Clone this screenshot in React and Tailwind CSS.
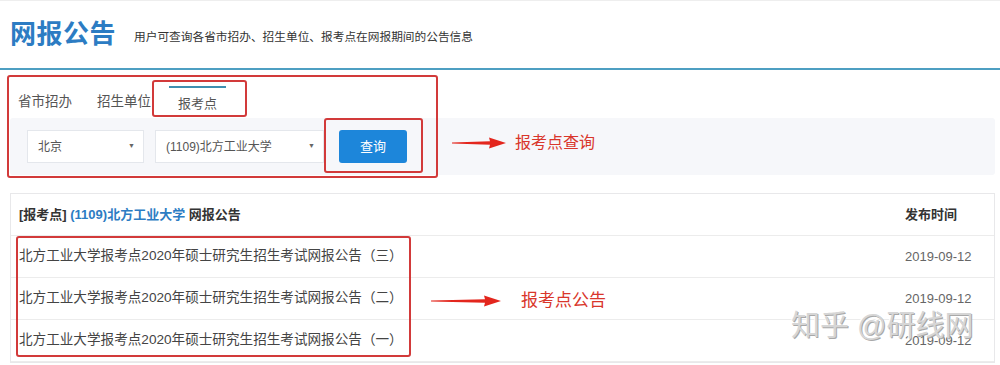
import React from 'react';

const font = '[font-family:"Liberation_Sans","Noto_Sans_CJK_SC",sans-serif]';

const Arrow = ({ w = 55 }) => (
  <svg width={w} height="12" viewBox={`0 0 ${w} 12`}>
    <polygon
      points={`0,5.6 ${w - 16},4.2 ${w - 17},0.5 ${w},6 ${w - 17},11.5 ${w - 16},7.8 0,6.4`}
      fill="#e3261d"
    />
  </svg>
);

const Select = ({ label, width }) => (
  <div
    className={`h-[33px] bg-white border border-[#e4e7ec] flex items-center justify-between pl-[10px] pr-[8px] text-[12px] text-[#555] ${width}`}
  >
    <span>{label}</span>
    <span className="text-[7px] text-[#666]">▼</span>
  </div>
);

const rows = [
  '北方工业大学报考点2020年硕士研究生招生考试网报公告（三）',
  '北方工业大学报考点2020年硕士研究生招生考试网报公告（二）',
  '北方工业大学报考点2020年硕士研究生招生考试网报公告（一）',
];

export default function App() {
  return (
    <div className={`w-[1000px] h-[365px] bg-white overflow-hidden relative ${font}`}>
      {/* HEADER */}
      <header className="h-[70px] border-t border-[#eeeeee] border-b-2 border-b-[#4d9fc2] flex items-center pl-[10px] pb-[2px]">
        <h1 className="text-[26px] font-bold text-[#2c7cc3] tracking-[0.5px] leading-none">网报公告</h1>
        <p className="ml-[18px] mt-[6px] text-[11.7px] text-[#333]">用户可查询各省市招办、招生单位、报考点在网报期间的公告信息</p>
      </header>

      {/* TABS */}
      <div className="relative">
        <div className="flex items-end h-[48px] pl-[10px] text-[13.5px] text-[#555]">
          <div className="h-[32px] px-[8px] flex items-center">省市招办</div>
          <div className="h-[32px] px-[8px] ml-[9px] flex items-center">招生单位</div>
          <div className="h-[32px] w-[57px] ml-[10px] pt-[2px] flex items-center justify-center border-t-2 border-[#3e8fb0] bg-white text-[13px]">报考点</div>
        </div>

        {/* SEARCH BAR */}
        <div className="ml-[10px] mr-[5px] h-[57px] bg-[#f6f7fa] rounded-[3px] flex items-start pt-[12px] pl-[17px]">
          <Select label="北京" width="w-[117px]" />
          <div className="ml-[11px]">
            <Select label="(1109)北方工业大学" width="w-[169px]" />
          </div>
          <button className="ml-[15px] w-[68px] h-[33px] rounded-[3px] bg-[#1d86da] text-white text-[13px]">查询</button>
          <div className="ml-[45px] mt-[1px] flex items-center">
            <Arrow w={54} />
            <span className="ml-[9px] text-[16px] text-[#d9362b]">报考点查询</span>
          </div>
        </div>

        {/* annotations */}
        <div className="absolute left-[7px] top-[5px] w-[431px] h-[103px] border-2 border-[#d23a3a] rounded-[3px] pointer-events-none" />
        <div className="absolute left-[152px] top-[10px] w-[95px] h-[37px] border-2 border-[#d23a3a] rounded-[3px] pointer-events-none" />
        <div className="absolute left-[324px] top-[48px] w-[99px] h-[55px] border-2 border-[#d23a3a] rounded-[3px] pointer-events-none" />
      </div>

      {/* TABLE */}
      <div className="relative mt-[18px] ml-[10px] mr-[5px] border border-[#e8e8ea]">
        <div className="h-[42px] flex items-center justify-between pl-[8px] pr-[21px] border-b border-[#ececec] text-[13px] font-bold text-[#333]">
          <div>
            [报考点] <span className="text-[#2c7cc3]">(1109)北方工业大学</span> 网报公告
          </div>
          <div className="w-[68px]">发布时间</div>
        </div>
        {rows.map((r, i) => (
          <div key={i} className="h-[42px] flex items-center justify-between pl-[8px] pr-[21px] border-b border-[#ececec] text-[13.6px] text-[#444]">
            <div>{r}</div>
            <div className="w-[68px] text-[13px] text-[#666]">2019-09-12</div>
          </div>
        ))}

        {/* annotations */}
        <div className="absolute left-[5px] top-[42px] w-[395px] h-[121px] border-2 border-[#d23a3a] rounded-[3px] pointer-events-none" />
        <div className="absolute left-[420px] top-[94px] flex items-center">
          <Arrow w={70} />
          <span className="ml-[20px] text-[17px] text-[#d9362b]">报考点公告</span>
        </div>
        <div className="absolute left-[780px] top-[118px] text-[29px] text-[#d6d6d6] leading-none whitespace-nowrap [text-shadow:1px_1px_0_#a8a8a8,-1px_-1px_0_#ffffff] pointer-events-none">
          知乎 @研线网
        </div>
      </div>
    </div>
  );
}
